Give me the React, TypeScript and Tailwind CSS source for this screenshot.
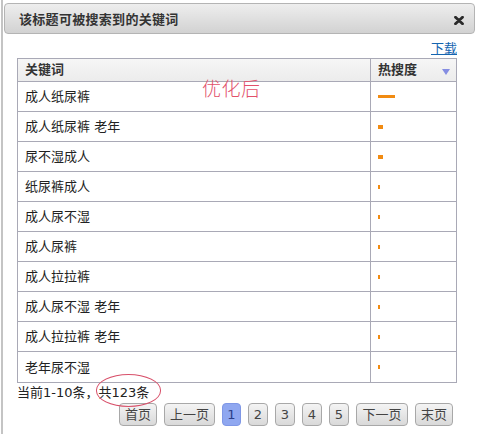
import React from "react";

const rows: { k: string; w: number; h: number }[] = [
  { k: "成人纸尿裤", w: 17, h: 3 },
  { k: "成人纸尿裤 老年", w: 5, h: 4 },
  { k: "尿不湿成人", w: 5, h: 4 },
  { k: "纸尿裤成人", w: 2, h: 4 },
  { k: "成人尿不湿", w: 2, h: 4 },
  { k: "成人尿裤", w: 2, h: 4 },
  { k: "成人拉拉裤", w: 2, h: 4 },
  { k: "成人尿不湿 老年", w: 2, h: 4 },
  { k: "成人拉拉裤 老年", w: 2, h: 4 },
  { k: "老年尿不湿", w: 2, h: 4 },
];

const btn =
  "h-[23px] flex items-center justify-center rounded-[4px] border border-[#a8a8a8] bg-gradient-to-b from-[#f4f4f4] to-[#d9d9d9] text-[13px] text-[#444]";

export default function App() {
  return (
    <div
      className="w-[479px] h-[434px] bg-white relative overflow-hidden"
      style={{ fontFamily: '"DejaVu Sans", "Noto Sans CJK SC", sans-serif' }}
    >
      <div className="ml-px h-full border-l-2 border-[#c4c4c4]">
        {/* title bar */}
        <div className="ml-px pt-[3px]">
          <div className="w-[471px] h-[31px] rounded-[4px] border border-[#b4b4b4] bg-gradient-to-b from-[#eeeeee] to-[#d2d2d2] flex items-center justify-between pl-[14px] pr-[10px] pt-[3px]">
            <span className="text-[13px] font-bold text-[#333] tracking-[0.3px]">该标题可被搜索到的关键词</span>
            <svg width="10" height="9" viewBox="0 0 10 9">
              <path d="M1.5 1.2 L8.5 7.8 M8.5 1.2 L1.5 7.8" stroke="#2a2a2a" strokeWidth="2.8" strokeLinecap="round" />
            </svg>
          </div>
        </div>

        {/* body */}
        <div className="ml-[14px] w-[440px]">
          <div className="h-[24px] flex items-end justify-end pb-[1px]">
            <a className="text-[13px] text-[#1565b0] underline leading-[16px]">下载</a>
          </div>

          <div className="relative border border-[#a9a9b6]">
            <div className="h-[23px] flex bg-gradient-to-b from-[#f6f6f6] to-[#ececec] border-b border-[#a9a9b6]">
              <div className="w-[353px] flex items-center pl-[7px] text-[13px] font-bold text-[#333] border-r border-[#a9a9b6]">关键词</div>
              <div className="flex-1 flex items-center justify-between pl-[7px] pr-[6px] text-[13px] font-bold text-[#333]">
                <span>热搜度</span>
                <svg width="8" height="6" viewBox="0 0 8 6" className="mt-[3px]">
                  <path d="M0 0 H8 L4 6 Z" fill="#858de2" />
                </svg>
              </div>
            </div>
            {rows.map((r, i) => (
              <div key={i} className={`h-[30px] flex ${i < rows.length - 1 ? "border-b border-[#a9a9b6]" : ""}`}>
                <div className="w-[353px] flex items-center pl-[7px] text-[13px] text-[#222] border-r border-[#a9a9b6] pt-px">{r.k}</div>
                <div className="flex-1 flex items-center pl-[7px]">
                  <div className="bg-[#f18b12]" style={{ width: r.w, height: r.h }} />
                </div>
              </div>
            ))}
            <div className="absolute left-[184px] top-[18px] text-[19px] text-[#e2506a] font-light leading-[24px] tracking-[0.5px]">优化后</div>
          </div>

          <div className="h-[20px] flex items-center text-[13px] text-[#222]">
            <span>当前1-10条，</span>
            <span className="relative">
              共123条
              <span className="absolute left-[-3px] right-[-12px] top-[-9px] bottom-[-4px] rounded-[50%] border border-[#d8506a]" />
            </span>
          </div>

          <div className="flex justify-end gap-[7px] pr-[4px]">
            <div className={`${btn} w-[38px]`}>首页</div>
            <div className={`${btn} w-[51px]`}>上一页</div>
            <div className="h-[23px] w-[19px] flex items-center justify-center rounded-[4px] border border-[#7f97e6] bg-[#8fa7f0] text-[13px] text-[#2c3f88]">1</div>
            <div className={`${btn} w-[20px]`}>2</div>
            <div className={`${btn} w-[20px]`}>3</div>
            <div className={`${btn} w-[20px]`}>4</div>
            <div className={`${btn} w-[20px]`}>5</div>
            <div className={`${btn} w-[52px]`}>下一页</div>
            <div className={`${btn} w-[38px]`}>末页</div>
          </div>
        </div>
      </div>
    </div>
  );
}
